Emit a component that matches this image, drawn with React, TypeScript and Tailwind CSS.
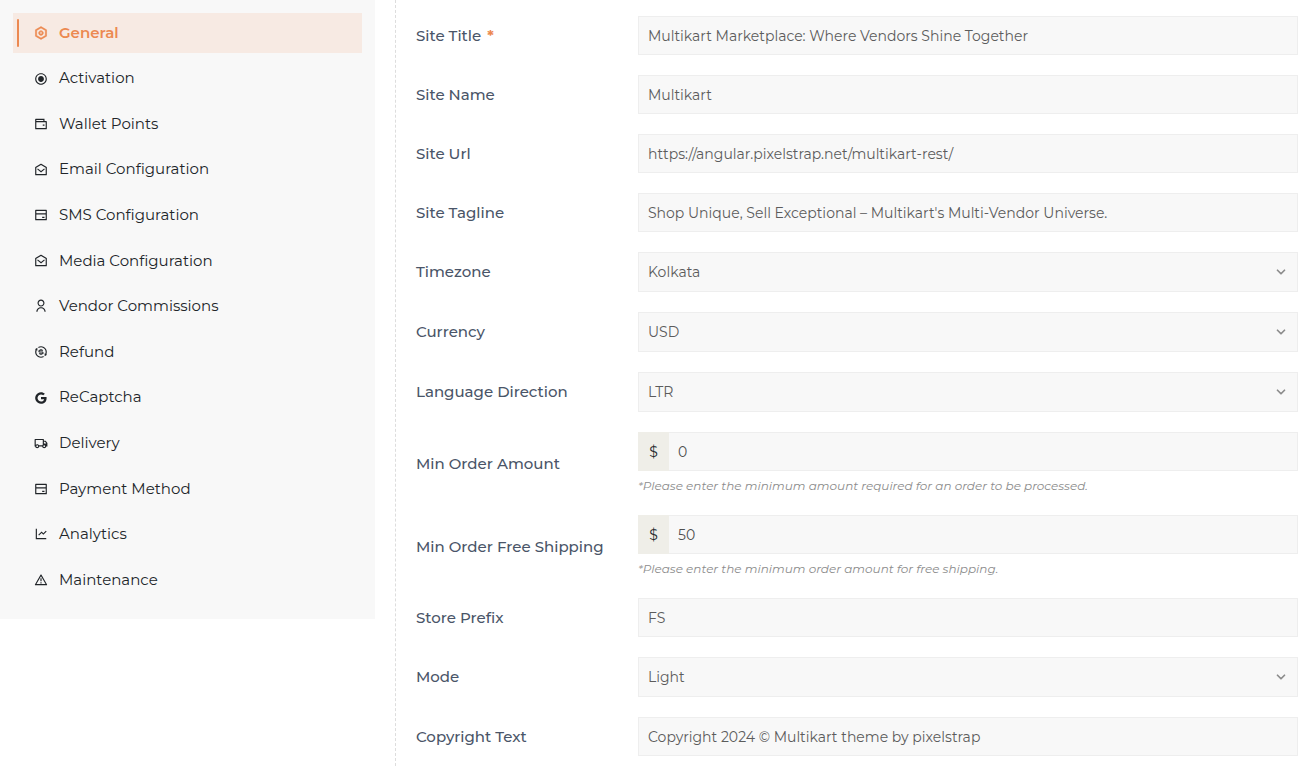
import { ReactNode } from "react";
import { IconType } from "react-icons";
import {
  RiSettingsLine,
  RiRadioButtonLine,
  RiWalletLine,
  RiMailOpenLine,
  RiBankCardLine,
  RiUserLine,
  RiExchangeDollarLine,
  RiGoogleFill,
  RiTruckLine,
  RiLineChartLine,
  RiAlertLine,
} from "react-icons/ri";
import { ChevronDown } from "lucide-react";

const tabs: { label: string; icon: IconType }[] = [
  { label: "General", icon: RiSettingsLine },
  { label: "Activation", icon: RiRadioButtonLine },
  { label: "Wallet Points", icon: RiWalletLine },
  { label: "Email Configuration", icon: RiMailOpenLine },
  { label: "SMS Configuration", icon: RiBankCardLine },
  { label: "Media Configuration", icon: RiMailOpenLine },
  { label: "Vendor Commissions", icon: RiUserLine },
  { label: "Refund", icon: RiExchangeDollarLine },
  { label: "ReCaptcha", icon: RiGoogleFill },
  { label: "Delivery", icon: RiTruckLine },
  { label: "Payment Method", icon: RiBankCardLine },
  { label: "Analytics", icon: RiLineChartLine },
  { label: "Maintenance", icon: RiAlertLine },
];

function Row({ id, label, required, children }: { id: string; label: string; required?: boolean; children: ReactNode }) {
  return (
    <div className="grid grid-cols-[222px_minmax(0,1fr)] items-center">
      <label htmlFor={id} className="text-[15px] leading-5 font-medium text-[#4a5568]">
        {label}
        {required && <span className="ml-1.5 font-bold text-[#ec8951]">*</span>}
      </label>
      {children}
    </div>
  );
}

function TextRow({ id, label, value, required }: { id: string; label: string; value: string; required?: boolean }) {
  return (
    <Row id={id} label={label} required={required}>
      <input
        id={id}
        type="text"
        defaultValue={value}
        required={required}
        className="h-[39px] w-full border border-[#eeeeee] bg-[#f8f8f8] px-[9px] text-sm text-[#5c5c5c] outline-none"
      />
    </Row>
  );
}

function SelectRow({ id, label, value }: { id: string; label: string; value: string }) {
  return (
    <Row id={id} label={label}>
      <div className="relative">
        <select
          id={id}
          defaultValue={value}
          className="block h-10 w-full appearance-none border border-[#eeeeee] bg-[#f8f8f8] px-[9px] text-sm text-[#5c5c5c] outline-none"
        >
          <option>{value}</option>
        </select>
        <ChevronDown size={14} strokeWidth={3} className="pointer-events-none absolute top-[13px] right-[10px] text-[#8c8c8c]" />
      </div>
    </Row>
  );
}

function AmountRow({ id, label, value, help }: { id: string; label: string; value: string; help: string }) {
  return (
    <Row id={id} label={label}>
      <div>
        <div className="flex h-[39px]">
          <span className="flex w-[31px] shrink-0 items-center justify-center bg-[#efeee8] text-sm text-[#212529]">
            $
          </span>
          <input
            id={id}
            type="text"
            inputMode="decimal"
            defaultValue={value}
            aria-describedby={`${id}-help`}
            className="min-w-0 flex-1 border border-l-0 border-[#eeeeee] bg-[#f8f8f8] px-[9px] text-sm text-[#4f4f4f] outline-none"
          />
        </div>
        <p id={`${id}-help`} className="mt-1.5 text-xs leading-[18px] text-[#8c8c8c] italic">
          {help}
        </p>
      </div>
    </Row>
  );
}

export default function App() {
  return (
    <div className="flex min-h-screen items-stretch bg-white font-['Montserrat','Inter',sans-serif]">
      <nav
        aria-label="Settings"
        className="flex min-h-[619px] w-[375px] shrink-0 flex-col justify-between self-start bg-[#f8f8f8] px-[13px] pt-[13px] pb-[19px]"
      >
        {tabs.map(({ label, icon: Icon }, i) => (
          <button
            key={label}
            type="button"
            aria-current={i === 0 ? "page" : undefined}
            className={
              i === 0
                ? "flex h-10 items-center bg-[#f7eae3] pl-1 text-left text-[15px] font-semibold text-[#ec8951]"
                : "flex h-10 items-center pl-1 text-left text-[15px] text-[#212529]"
            }
          >
            <span className={i === 0 ? "h-7 w-0.5 rounded-full bg-[#ec8951]" : "h-7 w-0.5"} />
            <Icon size={14} className={i === 0 ? "mr-[11px] ml-[15px] shrink-0 stroke-current stroke-1" : "mr-[11px] ml-[15px] shrink-0"} />
            {label}
          </button>
        ))}
      </nav>

      <form className="ml-5 flex min-w-0 flex-1 flex-col gap-5 border-l border-dashed border-[#dddddd] pt-4 pr-2.5 pb-2 pl-5">
        <TextRow id="site-title" label="Site Title" value="Multikart Marketplace: Where Vendors Shine Together" required />
        <TextRow id="site-name" label="Site Name" value="Multikart" />
        <TextRow id="site-url" label="Site Url" value="https://angular.pixelstrap.net/multikart-rest/" />
        <TextRow id="site-tagline" label="Site Tagline" value="Shop Unique, Sell Exceptional – Multikart's Multi-Vendor Universe." />
        <SelectRow id="timezone" label="Timezone" value="Kolkata" />
        <SelectRow id="currency" label="Currency" value="USD" />
        <SelectRow id="direction" label="Language Direction" value="LTR" />
        <AmountRow
          id="min-order"
          label="Min Order Amount"
          value="0"
          help="*Please enter the minimum amount required for an order to be processed."
        />
        <AmountRow
          id="min-free-shipping"
          label="Min Order Free Shipping"
          value="50"
          help="*Please enter the minimum order amount for free shipping."
        />
        <TextRow id="prefix" label="Store Prefix" value="FS" />
        <SelectRow id="mode" label="Mode" value="Light" />
        <TextRow id="copyright" label="Copyright Text" value="Copyright 2024 © Multikart theme by pixelstrap" />
      </form>
    </div>
  );
}
